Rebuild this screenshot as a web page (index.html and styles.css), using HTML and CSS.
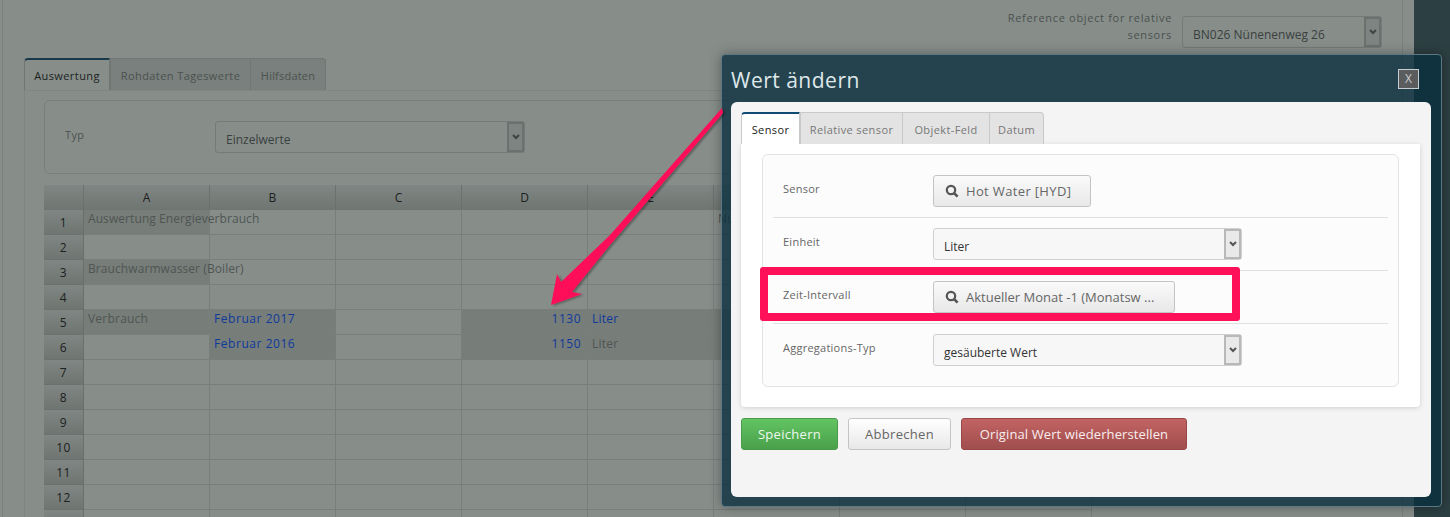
FILE: index.html
```html
<!DOCTYPE html>
<html lang="de">
<head>
<meta charset="utf-8">
<title>Wert ändern</title>
<link rel="stylesheet" href="styles.css">
</head>
<body>
<div class="page">
  <div class="sheet">
    <div class="ref-row">
      <div class="ref-label">Reference object for relative<br>sensors</div>
      <div class="select ref-select"><span>BN026 Nünenenweg 26</span><i class="caret"><svg viewBox="0 0 8 6" width="8" height="6"><path d="M1 1l3 3 3-3" fill="none" stroke="currentColor" stroke-width="2"/></svg></i></div>
    </div>
    <div class="tabs">
      <div class="tab active t-aus">Auswertung</div>
      <div class="tab t-roh">Rohdaten Tageswerte</div>
      <div class="tab last t-hil">Hilfsdaten</div>
    </div>
    <div class="panel">
      <div class="type-box">
        <div class="type-label">Typ</div>
        <div class="select type-select"><span>Einzelwerte</span><i class="caret"><svg viewBox="0 0 8 6" width="8" height="6"><path d="M1 1l3 3 3-3" fill="none" stroke="currentColor" stroke-width="2"/></svg></i></div>
      </div>
      <div class="grid">
        <div class="h corner"></div><div class="h">A</div><div class="h">B</div><div class="h">C</div><div class="h">D</div><div class="h">E</div><div class="h"></div><div class="h"></div><div class="h"></div>
        <div class="n">1</div><div class="c s over">Auswertung Energieverbrauch</div><div class="c"></div><div class="c"></div><div class="c"></div><div class="c"></div><div class="c">Nü</div><div class="c"></div><div class="c"></div>
        <div class="n">2</div><div class="c"></div><div class="c"></div><div class="c"></div><div class="c"></div><div class="c"></div><div class="c"></div><div class="c"></div><div class="c"></div>
        <div class="n">3</div><div class="c s over">Brauchwarmwasser (Boiler)</div><div class="c"></div><div class="c"></div><div class="c"></div><div class="c"></div><div class="c"></div><div class="c"></div><div class="c"></div>
        <div class="n">4</div><div class="c"></div><div class="c"></div><div class="c"></div><div class="c"></div><div class="c"></div><div class="c"></div><div class="c"></div><div class="c"></div>
        <div class="n">5</div><div class="c s">Verbrauch</div><div class="c s blue date">Februar 2017</div><div class="c"></div><div class="c s blue right">1130</div><div class="c s blue">Liter</div><div class="c s"></div><div class="c"></div><div class="c"></div>
        <div class="n">6</div><div class="c"></div><div class="c s blue date">Februar 2016</div><div class="c"></div><div class="c s blue right">1150</div><div class="c s">Liter</div><div class="c s"></div><div class="c"></div><div class="c"></div>
        <div class="n">7</div><div class="c"></div><div class="c"></div><div class="c"></div><div class="c"></div><div class="c"></div><div class="c"></div><div class="c"></div><div class="c"></div>
        <div class="n">8</div><div class="c"></div><div class="c"></div><div class="c"></div><div class="c"></div><div class="c"></div><div class="c"></div><div class="c"></div><div class="c"></div>
        <div class="n">9</div><div class="c"></div><div class="c"></div><div class="c"></div><div class="c"></div><div class="c"></div><div class="c"></div><div class="c"></div><div class="c"></div>
        <div class="n">10</div><div class="c"></div><div class="c"></div><div class="c"></div><div class="c"></div><div class="c"></div><div class="c"></div><div class="c"></div><div class="c"></div>
        <div class="n">11</div><div class="c"></div><div class="c"></div><div class="c"></div><div class="c"></div><div class="c"></div><div class="c"></div><div class="c"></div><div class="c"></div>
        <div class="n">12</div><div class="c"></div><div class="c"></div><div class="c"></div><div class="c"></div><div class="c"></div><div class="c"></div><div class="c"></div><div class="c"></div>
        <div class="n"></div><div class="c"></div><div class="c"></div><div class="c"></div><div class="c"></div><div class="c"></div><div class="c"></div><div class="c"></div><div class="c"></div>
      </div>
    </div>
  </div>

  <div class="modal">
    <div class="modal-head">
      <h2 class="modal-title">Wert ändern</h2>
      <div class="close">X</div>
    </div>
    <div class="modal-body">
      <div class="tabs m-tabs">
        <div class="m-tab active t-sensor">Sensor</div>
        <div class="m-tab t-rel">Relative sensor</div>
        <div class="m-tab t-obj">Objekt-Feld</div>
        <div class="m-tab last t-dat">Datum</div>
      </div>
      <div class="m-content">
        <div class="form-box">
          <div class="form-row">
            <div class="f-label">Sensor</div>
            <div class="pick sensor-pick"><svg class="lens" viewBox="0 0 14 14" width="14" height="14"><circle cx="6" cy="6" r="4.2" fill="none" stroke="currentColor" stroke-width="2.2"/><path d="M9 9l3.6 3.6" stroke="currentColor" stroke-width="2.6"/></svg><span>Hot Water [HYD]</span></div>
          </div>
          <div class="form-row">
            <div class="f-label">Einheit</div>
            <div class="select m-select"><span>Liter</span><i class="caret"><svg viewBox="0 0 8 6" width="8" height="6"><path d="M1 1l3 3 3-3" fill="none" stroke="currentColor" stroke-width="2"/></svg></i></div>
          </div>
          <div class="form-row">
            <div class="f-label">Zeit-Intervall</div>
            <div class="pick zeit-pick"><svg class="lens" viewBox="0 0 14 14" width="14" height="14"><circle cx="6" cy="6" r="4.2" fill="none" stroke="currentColor" stroke-width="2.2"/><path d="M9 9l3.6 3.6" stroke="currentColor" stroke-width="2.6"/></svg><span>Aktueller Monat -1 (Monatsw ...</span></div>
          </div>
          <div class="form-row">
            <div class="f-label">Aggregations-Typ</div>
            <div class="select m-select"><span>gesäuberte Wert</span><i class="caret"><svg viewBox="0 0 8 6" width="8" height="6"><path d="M1 1l3 3 3-3" fill="none" stroke="currentColor" stroke-width="2"/></svg></i></div>
          </div>
        </div>
      </div>
      <div class="actions">
        <div class="btn green">Speichern</div>
        <div class="btn plain">Abbrechen</div>
        <div class="btn red">Original Wert wiederherstellen</div>
      </div>
    </div>
  </div>

  <div class="mark"></div>
  <svg class="arrow" viewBox="0 0 1450 517" width="1450" height="517">
    <defs><filter id="sh" x="-10%" y="-10%" width="120%" height="120%"><feDropShadow dx="2" dy="1" stdDeviation="1.2" flood-color="#000" flood-opacity=".35"/></filter></defs>
    <polygon filter="url(#sh)" fill="#fe1158" points="722,108 723,113 610,245 572,292 582,294 551,305 557,274 561,282 610,235"/>
  </svg>
</div>
</body>
</html>
```

FILE: styles.css
```css
* { box-sizing: border-box; }
html, body { margin: 0; padding: 0; }
body { font-family: "Open Sans", "Noto Sans", sans-serif; font-size: 11px; color: #444a48; }
.page { position: relative; width: 1450px; height: 517px; overflow: hidden; background: #2c3f42; }
.sheet { width: 1414px; height: 517px; background: #878e8a; padding: 0 12px 0 24px; position: relative; }
.sheet::before { content: ""; position: absolute; left: 2px; top: 0; bottom: 0; width: 1px; background: #7b827f; }
.sheet::after { content: ""; position: absolute; right: 11px; top: 0; bottom: 0; width: 1px; background: #7b827f; }
.ref-row { height: 58px; display: flex; justify-content: flex-end; padding: 9px 20px 0 0; gap: 10px; }
.ref-label { width: 180px; text-align: right; line-height: 17px; letter-spacing: .68px; color: #4b514f; }
.select { display: flex; justify-content: space-between; background: #878e8a; border: 1px solid #737a77; border-radius: 3px; font-size: 12px; color: #3a403e; }
.select span { padding: 9px 0 0 10px; line-height: 17px; }
.caret { display: flex; align-items: center; justify-content: center; width: 17px; background: #7d8481; border: 2px solid #6a716e; color: #3f4543; font-style: normal; }
.ref-select { width: 200px; height: 32px; margin-top: 7px; }
.tabs { display: flex; height: 32px; }
.tab { padding-top: 9px; text-align: center; height: 32px; background: #79807d; border: 1px solid #6f7673; border-width: 1px 0 0 1px; letter-spacing: .42px; color: #4c5250; line-height: 15px; }
.t-aus { width: 86px; }
.t-roh { width: 140px; }
.t-hil { width: 76px; letter-spacing: .2px; }
.tab.last { border-right: 1px solid #6f7673; border-radius: 0 4px 0 0; }
.tab.active { background: #878e8a; border-top: 2px solid #19394a; border-right: 1px solid #6f7673; border-radius: 4px 0 0 0; color: #1b1f1e; padding-top: 8px; }
.panel { border-left: 1px solid #7e8582; border-top: 1px solid #7e8582; padding: 9px 0 0 19px; background: #878e8a; height: 427px; }
.type-box { height: 74px; border: 1px solid #777e7b; border-radius: 6px; display: flex; padding: 20px 0 0 20px; }
.type-label { width: 150px; line-height: 15px; padding-top: 6px; letter-spacing: .4px; color: #4c5250; }
.type-select { width: 310px; height: 32px; }
.grid { display: grid; grid-template-columns: 40px repeat(8, 126px); grid-auto-rows: 25px; margin-top: 11px; }
.h { background: linear-gradient(#7f8683, #6f7672); border-right: 1px solid #6a716e; text-align: center; line-height: 25px; color: #1c201f; font-size: 12px; }
.n { background: linear-gradient(#7f8683, #6f7672); border-right: 1px solid #686f6c; border-bottom: 1px solid #6a716e; text-align: center; line-height: 26px; color: #1c201f; font-size: 12px; letter-spacing: .5px; }
.c { background: #878e8a; border-right: 1px solid #777e7b; border-bottom: 1px solid #777e7b; padding: 0 4px; line-height: 17px; font-size: 12px; letter-spacing: .22px; color: #4f5553; white-space: nowrap; }
.c.s { background: #777d79; }
.c.over { position: relative; z-index: 1; letter-spacing: .08px; }
.blue { color: #0f3a9c; }
.date { letter-spacing: .55px; }
.right { text-align: right; padding-right: 6px; letter-spacing: .5px; }
.modal { position: absolute; left: 721px; top: 54px; width: 721px; height: 453px; background: rgba(8, 46, 62, .78); border: 1px solid #5c7884; border-radius: 4px; box-shadow: 0 0 12px rgba(0,0,0,.35); padding: 0 10px 0 9px; }
.modal-head { height: 47px; display: flex; justify-content: space-between; }
.modal-title { margin: 0; font-weight: 400; font-size: 21px; line-height: 28px; padding-top: 11px; color: #dfe7ea; letter-spacing: .5px; }
.close { width: 21px; height: 20px; margin: 14px 12px 0 0; background: #5a5c5d; border: 1px solid #c6cdd0; color: #c8cccd; text-align: center; line-height: 18px; font-size: 12px; }
.modal-body { height: 395px; background: #f4f4f4; border-radius: 6px; padding: 10px; }
.m-tabs { height: 32px; }
.m-tab { padding-top: 9px; text-align: center; height: 32px; background: #e3e3e3; border: 1px solid #c9c9c9; border-width: 1px 0 0 1px; letter-spacing: .4px; color: #777; line-height: 15px; }
.t-sensor { width: 59px; }
.t-rel { width: 102px; }
.t-obj { width: 87px; }
.t-dat { width: 55px; }
.m-tab.last { border-right: 1px solid #c9c9c9; border-radius: 0 4px 0 0; }
.m-tab.active { background: #fff; border-top: 2px solid #0f4a75; border-right: 1px solid #c9c9c9; border-radius: 4px 0 0 0; color: #222; padding-top: 8px; }
.m-content { width: 679px; height: 263px; background: #fff; border-radius: 0 0 4px 4px; box-shadow: 0 1px 5px rgba(0,0,0,.15); padding: 10px 21px 0; }
.form-box { height: 233px; background: #fcfcfc; border: 1px solid #e3e3e3; border-radius: 6px; padding: 0 10px; }
.form-row { height: 53px; border-bottom: 1px solid #e0e0e0; padding: 10px 0 0 10px; display: flex; }
.form-row:first-child { height: 63px; padding-top: 20px; }
.form-row:last-child { border-bottom: 0; }
.f-label { width: 150px; line-height: 15px; padding-top: 6px; letter-spacing: .25px; color: #666; }
.pick { height: 32px; display: flex; align-items: center; background: linear-gradient(#fafafa, #e8e8e8); border: 1px solid #c4c4c4; border-radius: 3px; color: #666; font-size: 13px; padding-left: 11px; }
.lens { margin-right: 7px; color: #555; flex: none; }
.sensor-pick { width: 158px; letter-spacing: .35px; }
.zeit-pick { width: 242px; }
.m-select { width: 309px; height: 32px; background: #f7f7f7; border-color: #d0d0d0; color: #333; }
.m-select .caret { background: #e9e9e9; border-color: #b8b8b8; color: #555; }
.actions { display: flex; gap: 10px; margin-top: 11px; }
.btn { height: 32px; border-radius: 3px; font-size: 13px; line-height: 31px; text-align: center; letter-spacing: .3px; border: 1px solid; }
.green { width: 97px; background: linear-gradient(#62c462, #4aa04a); border-color: #499b49; color: #eef8ee; }
.plain { width: 103px; background: linear-gradient(#fff, #e8e8e8); border-color: #c4c4c4; color: #666; }
.red { width: 226px; background: linear-gradient(#c26363, #a04e4e); border-color: #984646; color: #f8eeee; letter-spacing: .1px; }
.mark { position: absolute; left: 760px; top: 267px; width: 480px; height: 54px; border: 8px solid #fe1158; border-radius: 3px; }
.arrow { position: absolute; left: 0; top: 0; pointer-events: none; }
```
